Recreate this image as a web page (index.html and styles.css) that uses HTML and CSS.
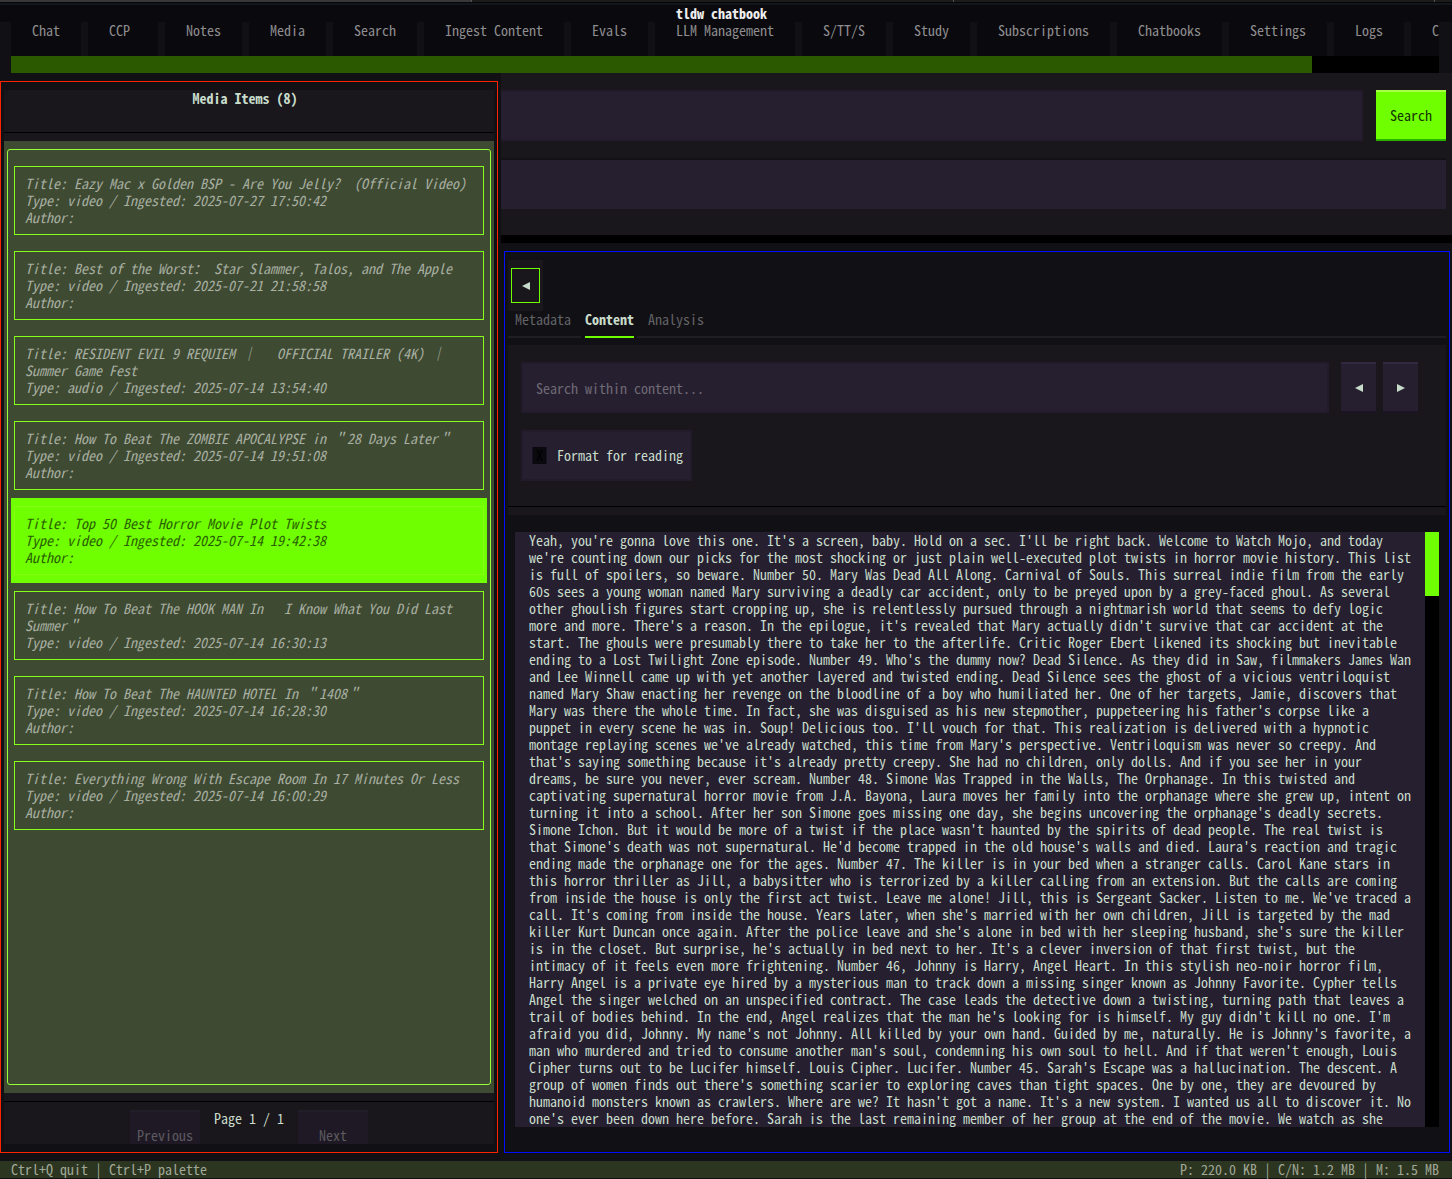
FILE: index.html
```html
<!DOCTYPE html>
<html lang="en">
<head>
<meta charset="utf-8">
<title>tldw chatbook</title>
<link rel="stylesheet" href="styles.css">
</head>
<body>
<div class="window-edge"><span class="edge-active"></span><span class="edge-rest"></span><span class="edge-rest"></span><span class="edge-last"></span></div>
<header class="app-header">
<h1 class="app-title">tldw chatbook</h1>
<nav class="tabs">
<button class="tab w10">Chat</button>
<button class="tab w10">CCP</button>
<button class="tab w11">Notes</button>
<button class="tab w11">Media</button>
<button class="tab w12">Search</button>
<button class="tab w20">Ingest Content</button>
<button class="tab w11">Evals</button>
<button class="tab w20">LLM Management</button>
<button class="tab w12">S/TT/S</button>
<button class="tab w11">Study</button>
<button class="tab w19">Subscriptions</button>
<button class="tab w15">Chatbooks</button>
<button class="tab w14">Settings</button>
<button class="tab w10">Logs</button>
<button class="tab w4">C</button>
</nav>
<div class="tabs-scroll"><div class="tabs-thumb"></div></div>
</header>
<main class="main">
<section class="media">
<h2 class="media-title">Media Items (8)</h2>
<div class="list-wrap">
<ul class="list">
<li><button class="item">Title: Eazy Mac x Golden BSP - Are You Jelly?  (Official Video)
Type: video / Ingested: 2025-07-27 17:50:42
Author:</button></li>
<li><button class="item">Title: Best of the Worst： Star Slammer, Talos, and The Apple
Type: video / Ingested: 2025-07-21 21:58:58
Author:</button></li>
<li><button class="item">Title: RESIDENT EVIL 9 REQUIEM ｜   OFFICIAL TRAILER (4K) ｜
Summer Game Fest
Type: audio / Ingested: 2025-07-14 13:54:40</button></li>
<li><button class="item">Title: How To Beat The ZOMBIE APOCALYPSE in ＂28 Days Later＂
Type: video / Ingested: 2025-07-14 19:51:08
Author:</button></li>
<li class="selected"><button class="item">Title: Top 50 Best Horror Movie Plot Twists
Type: video / Ingested: 2025-07-14 19:42:38
Author:</button></li>
<li><button class="item">Title: How To Beat The HOOK MAN In   I Know What You Did Last
Summer＂
Type: video / Ingested: 2025-07-14 16:30:13</button></li>
<li><button class="item">Title: How To Beat The HAUNTED HOTEL In ＂1408＂
Type: video / Ingested: 2025-07-14 16:28:30
Author:</button></li>
<li><button class="item">Title: Everything Wrong With Escape Room In 17 Minutes Or Less
Type: video / Ingested: 2025-07-14 16:00:29
Author:</button></li>
</ul>
</div>
<div class="pager">
<button class="page-btn" disabled>Previous</button>
<span class="page-label">Page 1 / 1</span>
<button class="page-btn" disabled>Next</button>
</div>
</section>
<section class="detail">
<form class="search">
<div class="search-row">
<input class="field" type="text" aria-label="Search media">
<button class="search-btn" type="button">Search</button>
</div>
<input class="field field-flat" type="text" aria-label="Keywords">
</form>
<div class="viewer">
<div class="back-wrap"><button class="back" aria-label="Collapse list"><svg width="8" height="8" viewBox="0 0 8 8"><path d="M8 0v8L0 4z"/></svg></button></div>
<nav class="view-tabs">
<button class="view-tab">Metadata</button>
<button class="view-tab active">Content</button>
<button class="view-tab">Analysis</button>
<span class="view-rest"></span>
</nav>
<div class="tools">
<div class="tools-row">
<input class="field" type="text" placeholder="Search within content..." aria-label="Search within content">
<button class="step" aria-label="Previous match"><svg width="8" height="8" viewBox="0 0 8 8"><path d="M8 0v8L0 4z"/></svg></button>
<button class="step" aria-label="Next match"><svg width="8" height="8" viewBox="0 0 8 8"><path d="M0 0v8L8 4z"/></svg></button>
</div>
<label class="check"><input class="check-box" type="checkbox">Format for reading</label>
</div>
<div class="reader">
<div class="reader-text">Yeah, you're gonna love this one. It's a screen, baby. Hold on a sec. I'll be right back. Welcome to Watch Mojo, and today
we're counting down our picks for the most shocking or just plain well-executed plot twists in horror movie history. This list
is full of spoilers, so beware. Number 50. Mary Was Dead All Along. Carnival of Souls. This surreal indie film from the early
60s sees a young woman named Mary surviving a deadly car accident, only to be preyed upon by a grey-faced ghoul. As several
other ghoulish figures start cropping up, she is relentlessly pursued through a nightmarish world that seems to defy logic
more and more. There's a reason. In the epilogue, it's revealed that Mary actually didn't survive that car accident at the
start. The ghouls were presumably there to take her to the afterlife. Critic Roger Ebert likened its shocking but inevitable
ending to a Lost Twilight Zone episode. Number 49. Who's the dummy now? Dead Silence. As they did in Saw, filmmakers James Wan
and Lee Winnell came up with yet another layered and twisted ending. Dead Silence sees the ghost of a vicious ventriloquist
named Mary Shaw enacting her revenge on the bloodline of a boy who humiliated her. One of her targets, Jamie, discovers that
Mary was there the whole time. In fact, she was disguised as his new stepmother, puppeteering his father's corpse like a
puppet in every scene he was in. Soup! Delicious too. I'll vouch for that. This realization is delivered with a hypnotic
montage replaying scenes we've already watched, this time from Mary's perspective. Ventriloquism was never so creepy. And
that's saying something because it's already pretty creepy. She had no children, only dolls. And if you see her in your
dreams, be sure you never, ever scream. Number 48. Simone Was Trapped in the Walls, The Orphanage. In this twisted and
captivating supernatural horror movie from J.A. Bayona, Laura moves her family into the orphanage where she grew up, intent on
turning it into a school. After her son Simone goes missing one day, she begins uncovering the orphanage's deadly secrets.
Simone Ichon. But it would be more of a twist if the place wasn't haunted by the spirits of dead people. The real twist is
that Simone's death was not supernatural. He'd become trapped in the old house's walls and died. Laura's reaction and tragic
ending made the orphanage one for the ages. Number 47. The killer is in your bed when a stranger calls. Carol Kane stars in
this horror thriller as Jill, a babysitter who is terrorized by a killer calling from an extension. But the calls are coming
from inside the house is only the first act twist. Leave me alone! Jill, this is Sergeant Sacker. Listen to me. We've traced a
call. It's coming from inside the house. Years later, when she's married with her own children, Jill is targeted by the mad
killer Kurt Duncan once again. After the police leave and she's alone in bed with her sleeping husband, she's sure the killer
is in the closet. But surprise, he's actually in bed next to her. It's a clever inversion of that first twist, but the
intimacy of it feels even more frightening. Number 46, Johnny is Harry, Angel Heart. In this stylish neo-noir horror film,
Harry Angel is a private eye hired by a mysterious man to track down a missing singer known as Johnny Favorite. Cypher tells
Angel the singer welched on an unspecified contract. The case leads the detective down a twisting, turning path that leaves a
trail of bodies behind. In the end, Angel realizes that the man he's looking for is himself. My guy didn't kill no one. I'm
afraid you did, Johnny. My name's not Johnny. All killed by your own hand. Guided by me, naturally. He is Johnny's favorite, a
man who murdered and tried to consume another man's soul, condemning his own soul to hell. And if that weren't enough, Louis
Cipher turns out to be Lucifer himself. Louis Cipher. Lucifer. Number 45. Sarah's Escape was a hallucination. The descent. A
group of women finds out there's something scarier to exploring caves than tight spaces. One by one, they are devoured by
humanoid monsters known as crawlers. Where are we? It hasn't got a name. It's a new system. I wanted us all to discover it. No
one's ever been down here before. Sarah is the last remaining member of her group at the end of the movie. We watch as she</div>
<div class="reader-track"><div class="reader-thumb"></div></div>
</div>
</div>
</section>
</main>
<footer class="status"><span>Ctrl+Q quit | Ctrl+P palette</span><span>P: 220.0 KB | C/N: 1.2 MB | M: 1.5 MB</span></footer>
</body>
</html>
```
FILE: styles.css
```css
:root {
  --bg: #111014;
  --panel: #19171b;
  --deep: #0a090d;
  --purple: #261f30;
  --lime: #6fff00;
  --text: #c8dccb;
}
* { box-sizing: border-box; }
body {
  margin: 0;
  height: 100vh;
  min-height: 600px;
  padding-bottom: 1px;
  display: flex;
  flex-direction: column;
  overflow: hidden;
  background: var(--bg);
  color: var(--text);
  font: 14px/17px "Noto Sans Mono CJK SC", "Noto Sans Mono CJK JP", "DejaVu Sans Mono", monospace;
}
button, input { font: inherit; color: inherit; border: 0; border-radius: 0; margin: 0; padding: 0; background: none; }
h1, h2, ul { margin: 0; padding: 0; font-size: 14px; line-height: 17px; }
ul { list-style: none; }
svg { display: block; fill: currentColor; }

.window-edge { display: flex; gap: 1px; height: 5px; flex: none; background: #555; border-bottom: 2px solid #11171c; box-shadow: inset 0 -1px #050506; }
.window-edge span { flex: 480; background: #1b1b1b; border-bottom: 1px solid #050506; }
.window-edge .edge-active { flex: 471; background: #393739; }
.window-edge .edge-last { flex: 17; }

.app-header { flex: none; }
.app-title { background: var(--deep); color: #eee; text-align: center; padding-right: 9px; }
.tabs { display: flex; gap: 7px; margin: 0 13px 0 11px; height: 34px; overflow-x: clip; }
.tab { flex: none; padding: 0 0 0 21px; background: var(--deep); color: #8e8d8f; text-align: left; display: flex; white-space: nowrap; }
.w4 { width: 28px; }
.w10 { width: 70px; }
.w11 { width: 77px; }
.w12 { width: 84px; }
.w14 { width: 98px; }
.w15 { width: 105px; }
.w19 { width: 133px; }
.w20 { width: 140px; }
.tabs-scroll { margin: 0 13px 0 11px; height: 17px; background: #000; }
.tabs-thumb { width: 91.1%; height: 100%; background: #2b5900; }

.main { flex: 1; min-height: 0; display: grid; grid-template-columns: minmax(0, 167fr) minmax(0, 317fr); }

.media { margin: 8px 3px 8px 0; padding: 8px 3px; border: 1px solid #ff2200; display: flex; flex-direction: column; min-height: 0; }
.media-title { height: 51px; flex: none; text-align: center; padding-right: 8px; background: linear-gradient(#000, #000) 0 42px / 100% 1px no-repeat var(--panel); }
.list-wrap { flex: 1; min-height: 0; padding: 8px 3px; background: #3f4a33; }
.list { height: 100%; border: 1px solid #95ff38; border-radius: 3px; padding: 8px 3px; overflow: hidden; }
.list li { padding: 8px 3px; height: 85px; }
.item { display: block; width: 100%; height: 69px; padding: 8px 10px; border: 1px solid #85ff18; text-align: left; white-space: pre; font-style: italic; color: #a7afa1; }
.selected { background: var(--lime); }
.selected .item { color: #2a5f00; border-color: #84ff14; }
.pager { height: 51px; flex: none; display: flex; justify-content: center; gap: 14px; padding-top: 17px; background: linear-gradient(#000, #000) 0 8px / 100% 1px no-repeat var(--panel); }
.page-btn { width: 70px; height: 34px; padding-top: 15px; border-top: 2px solid #221e29; background: #1e1924; color: #5d5a60; }
.page-label { width: 70px; white-space: nowrap; }

.detail { display: flex; flex-direction: column; min-height: 0; }
.search { flex: none; height: 170px; padding: 17px 6px 0 0; background: var(--panel); border-bottom: 8px solid #000; }
.search-row { display: flex; gap: 13px; margin-bottom: 19px; }
.field { display: block; width: 100%; min-width: 0; height: 51px; padding: 0 13px; background: var(--purple); border: 2px solid #231a2c; outline: 0; }
.search .field { border-left: 0; }
.search .field-flat { height: 49px; border: 0; box-shadow: 0 -2px #131116; }
.field::placeholder { color: #6e6974; opacity: 1; }
.search-btn { width: 70px; height: 51px; flex: none; background: var(--lime); color: #143300; border-top: 2px solid #a8ff48; border-bottom: 2px solid #29b100; }

.viewer { flex: 1; min-height: 0; margin: 8px 2px 8px 3px; padding: 8px 3px 25px; border: 1px solid #0010ff; display: flex; flex-direction: column; }
.back-wrap { width: 35px; height: 51px; flex: none; padding: 8px 3px; background: var(--panel); }
.back { width: 29px; height: 35px; border: 1px solid var(--lime); display: grid; place-items: center; }
.view-tabs { height: 27px; flex: none; display: flex; gap: 3px; }
.view-tab { padding: 0 7px; height: 27px; text-align: left; display: flex; color: #626366; border-bottom: 2px solid #201e22; width: 73px; }
.view-tab.active { width: 49px; margin: 0 0 0 1px; padding: 0; color: var(--text); font-weight: bold; border-color: var(--lime); }
.view-tab:nth-child(3) { padding-left: 11px; margin-right: -3px; }
.view-rest { flex: 1; border-bottom: 2px solid #201e22; }
.tools { height: 170px; flex: none; margin: 7px 0 17px; padding: 17px 28px 0 13px; background: linear-gradient(#000, #000) 0 161px / 100% 1px no-repeat var(--panel); }
.tools-row { display: flex; gap: 7px; margin-bottom: 17px; }
.tools .field { margin-right: 5px; }
.step { width: 35px; height: 51px; flex: none; background: var(--purple); border-top: 2px solid #32283f; border-bottom: 2px solid #1c1424; display: grid; place-items: center; }
.check { display: flex; align-items: center; gap: 10px; width: 171px; height: 51px; padding-left: 9px; background: var(--purple); border: 2px solid #231a2c; white-space: nowrap; }
.check-box { appearance: none; width: 15px; height: 17px; flex: none; background: #0a090d; color: #000; text-align: center; border: 0 solid #171320; border-width: 0 1px; }
.check-box::before { content: "X"; display: block; }
.reader { flex: 1; min-height: 0; display: flex; margin: 0 7px; background: var(--purple); }
.reader-text { flex: 1; min-width: 0; padding-left: 14px; white-space: pre; overflow: hidden; }
.reader-track { width: 14px; flex: none; background: #000; }
.reader-thumb { height: 64px; background: var(--lime); }

.status { flex: none; height: 17px; display: flex; justify-content: space-between; padding: 0 13px 0 11px; background: #2b351f; color: #a0a898; }
```
